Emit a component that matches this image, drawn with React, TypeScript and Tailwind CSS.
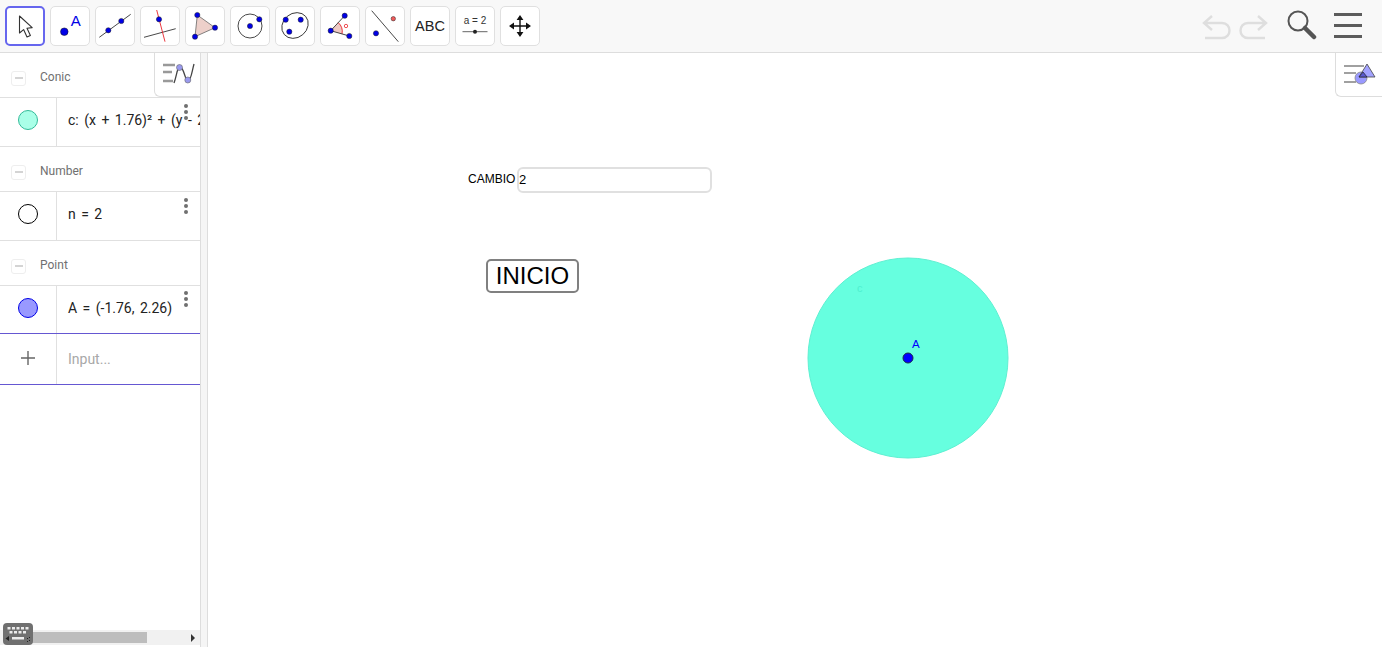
import React from 'react';

const BLUE = '#0000e6';

const Dot = ({ x, y, r = 2.6, fill = BLUE }: { x: number; y: number; r?: number; fill?: string }) => (
  <circle cx={x} cy={y} r={r} fill={fill} stroke="#222" strokeWidth={0.5} />
);

const ToolButton = ({ active = false, children }: { active?: boolean; children: React.ReactNode }) => (
  <div className={`w-10 h-10 shrink-0 bg-white rounded-[5px] ${active ? 'border-2 border-[#6666ee]' : 'border border-[#e0e0e0]'}`}>
    {children}
  </div>
);

const ToolIcon = ({ children, inset }: { children: React.ReactNode; inset: boolean }) => (
  <svg viewBox="0 0 40 40" className={`block w-10 h-10 ${inset ? '-m-[2px]' : '-m-px'}`}>
    {children}
  </svg>
);

const tools: React.ReactNode[] = [
  <path key="m" d="M14.5 10 L14.5 27 L18.6 23.6 L22 31 L25.4 29.4 L22 22.2 L27.2 21.6 Z" fill="#fff" stroke="#333" strokeWidth={1.1} strokeLinejoin="round" />,
  <g key="p">
    <circle cx={14.3} cy={25.7} r={3.8} fill={BLUE} stroke="#111" strokeWidth={0.5} />
    <text x={25.7} y={19.6} textAnchor="middle" fontSize={15} fill={BLUE} fontFamily="Liberation Sans, sans-serif">A</text>
  </g>,
  <g key="l">
    <line x1={4.3} y1={31.3} x2={35.7} y2={8.3} stroke="#333" strokeWidth={0.9} />
    <Dot x={13.3} y={24.3} />
    <Dot x={26.3} y={15} />
  </g>,
  <g key="n">
    <line x1={4} y1={31.3} x2={35.7} y2={22.7} stroke="#333" strokeWidth={0.9} />
    <line x1={16.7} y1={4} x2={25} y2={35.7} stroke="#e8232a" strokeWidth={0.9} />
    <Dot x={19} y={13.3} />
  </g>,
  <g key="t">
    <path d="M12.3 9 L30 21.7 L10 30.7 Z" fill="#edd0ca" stroke="#666" strokeWidth={0.8} />
    <Dot x={12.3} y={9} />
    <Dot x={30} y={21.7} />
    <Dot x={10} y={30.7} />
  </g>,
  <g key="c">
    <circle cx={20} cy={20} r={12} fill="none" stroke="#333" strokeWidth={0.9} />
    <Dot x={20} y={20} />
    <Dot x={29.3} y={13.3} />
  </g>,
  <g key="e">
    <ellipse cx={20} cy={19.5} rx={14} ry={12} transform="rotate(-40 20 19.5)" fill="none" stroke="#333" strokeWidth={0.9} />
    <Dot x={10.7} y={13.7} />
    <Dot x={25.7} y={13.7} />
    <Dot x={14.3} y={25.7} />
  </g>,
  <g key="a">
    <path d="M10.7 24.7 L18.2 16.6 A12 12 0 0 1 22 28 Z" fill="#efc9c3" />
    <path d="M18.2 16.6 A12 12 0 0 1 22 28" fill="none" stroke="#e8232a" strokeWidth={0.9} />
    <line x1={10.7} y1={24.7} x2={24.7} y2={9.7} stroke="#333" strokeWidth={0.9} />
    <line x1={10.7} y1={24.7} x2={29.3} y2={30} stroke="#333" strokeWidth={0.9} />
    <circle cx={26} cy={20} r={1.7} fill="none" stroke="#e8232a" strokeWidth={0.8} />
    <Dot x={10.7} y={24.7} />
    <Dot x={24.7} y={9.7} />
    <Dot x={29.3} y={30} />
  </g>,
  <g key="r">
    <line x1={6.7} y1={4.7} x2={33.3} y2={35.7} stroke="#333" strokeWidth={0.9} />
    <Dot x={28.3} y={12.7} r={2.2} fill="#f05a5a" />
    <Dot x={11} y={27.3} />
  </g>,
  <text key="abc" x={20} y={25} textAnchor="middle" fontSize={14.5} fill="#222" fontFamily="Liberation Sans, sans-serif">ABC</text>,
  <g key="s">
    <text x={20} y={18} textAnchor="middle" fontSize={10} fill="#333" fontFamily="Liberation Sans, sans-serif">a = 2</text>
    <line x1={7.5} y1={25.7} x2={32.5} y2={25.7} stroke="#555" strokeWidth={0.9} />
    <circle cx={20} cy={25.7} r={2} fill="#222" />
  </g>,
  <g key="v" fill="#111" stroke="#111">
    <path d="M20 13 V27 M13 20 H27" strokeWidth={1.4} />
    <path d="M20 9 L16.6 14 H23.4 Z M20 31 L16.6 26 H23.4 Z M9 20 L14 16.6 V23.4 Z M31 20 L26 16.6 V23.4 Z" stroke="none" />
  </g>,
];

const Marble = ({ className }: { className: string }) => (
  <div className={`w-5 h-5 rounded-full border ${className}`} />
);

const MoreDots = ({ className }: { className: string }) => (
  <div className={`absolute left-[184px] flex flex-col gap-[2px] ${className}`}>
    <div className="w-1 h-1 rounded-full bg-[#707070]" />
    <div className="w-1 h-1 rounded-full bg-[#707070]" />
    <div className="w-1 h-1 rounded-full bg-[#707070]" />
  </div>
);

const GroupHeader = ({ label }: { label: string }) => (
  <div className="h-[45px] flex items-center border-b border-[#e0e0e0] pl-[11px] pt-[4px]">
    <div className="w-[15px] h-[15px] rounded-[3px] border border-[#eeeeee] flex items-center justify-center mt-[2px]">
      <div className="w-[8px] h-[2px] bg-[#d4d4d4]" />
    </div>
    <span className="ml-[14px] text-[12px] text-[#707070]">{label}</span>
  </div>
);

const AlgebraRow = ({ marble, dots, heightClass, borderClass, children }: { marble: string; dots: string; heightClass: string; borderClass: string; children: React.ReactNode }) => (
  <div className={`relative flex border-b ${heightClass} ${borderClass}`}>
    <div className="w-[57px] shrink-0 flex items-center justify-center border-r border-[#e0e0e0] pb-[4px]">
      <Marble className={marble} />
    </div>
    <div className="pl-[11px] pb-[4px] flex items-center text-[14px] text-[#222] whitespace-nowrap overflow-hidden [word-spacing:2px]">{children}</div>
    <MoreDots className={dots} />
  </div>
);

const AlgebraToggle = () => (
  <div className="absolute top-0 right-0 w-[46px] h-[44px] bg-white border-l border-b border-[#dddddd] rounded-bl-[6px]">
    <svg viewBox="0 0 46 44" className="block w-[46px] h-[44px]">
      <path d="M8 12 H20 M8 19 H17 M8 28 H18" stroke="#999999" strokeWidth={2.4} />
      <path d="M19 30 C22 22 22 14 25 14 C29 14 30 28 33 28 C36 28 37 18 39 11" fill="none" stroke="#444" strokeWidth={1.3} />
      <circle cx={24.5} cy={14.5} r={3} fill="#9999ee" stroke="#666" strokeWidth={0.6} />
      <circle cx={32.8} cy={27} r={3} fill="#9999ee" stroke="#666" strokeWidth={0.6} />
    </svg>
  </div>
);

const GraphicsToggle = () => (
  <div className="absolute top-0 right-0 w-[47px] h-[44px] bg-white border-l border-b border-[#dddddd] rounded-bl-[6px]">
    <svg viewBox="0 0 47 44" className="block w-[47px] h-[44px]">
      <path d="M8 13 H28 M8 20 H20 M8 29 H20" stroke="#a0a0a0" strokeWidth={2.2} />
      <circle cx={25} cy={25} r={6} fill="#9999ff" stroke="#888" strokeWidth={0.8} />
      <path d="M31 11 L39 24 H23 Z" fill="#9999ff" fillOpacity={0.9} stroke="#444" strokeWidth={0.8} />
      <path d="M27 19 L31 24 H23 Z" fill="#5a5ad0" stroke="#222" strokeWidth={0.7} />
    </svg>
  </div>
);

const KeyboardIcon = () => (
  <div className="absolute left-[3px] bottom-[2px] w-[30px] h-[22px] rounded-[4px] bg-[#707070]">
    <svg viewBox="0 0 30 22" className="block w-[30px] h-[22px]">
      <path d="M4.5 4 h3 v2.5 h-3z M9 4 h3 v2.5 h-3z M13.5 4 h3 v2.5 h-3z M18 4 h3 v2.5 h-3z M22.5 4 h3 v2.5 h-3z M6.5 8 h3 v2.5 h-3z M11 8 h3 v2.5 h-3z M15.5 8 h3 v2.5 h-3z M20 8 h3 v2.5 h-3z M9 14 h12 v2.5 h-12z" fill="#ececec" />
      <path d="M2.5 15.5 L6 13 V18 Z" fill="#222" />
      <path d="M24 15 h1 v1 h-1z M26 14 h1 v1 h-1z M26 17 h1 v1 h-1z M24 18 h1 v1 h-1z" fill="#222" />
    </svg>
  </div>
);

const App = () => {
  return (
    <div className="w-[1382px] h-[647px] overflow-hidden bg-white flex flex-col font-['Roboto',sans-serif]">
      {/* toolbar */}
      <div className="h-[53px] shrink-0 bg-[#f8f8f8] border-b border-[#dddddd] flex items-start">
        <div className="flex gap-[5px] pl-[5px] pt-[6px]">
          {tools.map((icon, i) => (
            <ToolButton key={i} active={i === 0}>
              <ToolIcon inset={i === 0}>{icon}</ToolIcon>
            </ToolButton>
          ))}
        </div>
        <div className="ml-auto flex items-center pr-[20px] pt-[13px]">
          <svg viewBox="0 0 30 26" className="w-[30px] h-[26px]">
            <path d="M3 9 H20 C30 9 30 24 20 24 H3 M10 2 L2 9 L10 16" fill="none" stroke="#dedede" strokeWidth={2.4} />
          </svg>
          <svg viewBox="0 0 30 26" className="ml-[6px] w-[30px] h-[26px]">
            <path d="M27 9 H10 C0 9 0 24 10 24 H27 M20 2 L28 9 L20 16" fill="none" stroke="#dedede" strokeWidth={2.4} />
          </svg>
          <svg viewBox="0 0 32 30" className="ml-[18px] w-8 h-[30px] -mt-[3px]">
            <circle cx={12} cy={11} r={9.5} fill="none" stroke="#555" strokeWidth={2} />
            <path d="M19 18 L28 27" stroke="#555" strokeWidth={4.5} strokeLinecap="round" />
          </svg>
          <div className="ml-[16px] w-7 flex flex-col gap-[8px] -mt-[3px]">
            <div className="h-[3px] bg-[#5c5c5c]" />
            <div className="h-[3px] bg-[#5c5c5c]" />
            <div className="h-[3px] bg-[#5c5c5c]" />
          </div>
        </div>
      </div>

      <div className="flex-1 flex min-h-0">
        {/* algebra view */}
        <div className="relative w-[200px] shrink-0 overflow-hidden">
          <GroupHeader label="Conic" />
          <AlgebraRow marble="bg-[#aaffe8] border-[#33bb99]" dots="top-[6px]" heightClass="h-[49px]" borderClass="border-[#e0e0e0]">
            <span>c: (x + 1.76)² + (y - 2.26)² = 4</span>
          </AlgebraRow>
          <GroupHeader label="Number" />
          <AlgebraRow marble="bg-white border-black" dots="top-[6px]" heightClass="h-[49px]" borderClass="border-[#e0e0e0]">
            <span>n = 2</span>
          </AlgebraRow>
          <GroupHeader label="Point" />
          <AlgebraRow marble="bg-[#9999ff] border-[#0000e6]" dots="top-[5px]" heightClass="h-[48px]" borderClass="border-[#6557d2]">
            <span className="mt-[2px]">A = (-1.76, 2.26)</span>
          </AlgebraRow>
          <div className="h-[51px] flex border-b border-[#6557d2]">
            <div className="w-[57px] shrink-0 flex items-center justify-center border-r border-[#e0e0e0] pb-[2px]">
              <svg viewBox="0 0 16 16" className="w-4 h-4">
                <path d="M8 1 V15 M1 8 H15" stroke="#666" strokeWidth={1.4} />
              </svg>
            </div>
            <div className="pl-[11px] pt-[1px] flex items-center text-[14px] text-[#a8a8a8]">Input...</div>
          </div>
          <AlgebraToggle />
          {/* horizontal scroll bar */}
          <div className="absolute left-0 right-0 bottom-[2px] h-[15px] bg-[#f1f1f1] flex items-center">
            <div className="ml-[12px] w-[135px] h-[11px] bg-[#bdbdbd]" />
            <div className="ml-auto mr-[5px] w-0 h-0 border-y-[4px] border-y-transparent border-l-[4px] border-l-[#333333]" />
          </div>
          <KeyboardIcon />
        </div>

        {/* splitter */}
        <div className="w-[8px] shrink-0 bg-[#f5f5f5] border-x border-[#dddddd]" />

        {/* graphics view, a free canvas */}
        <div className="relative flex-1 bg-white">
          <span className="absolute left-[260px] top-[119px] text-[12px] leading-[14px] text-black font-['Liberation_Sans',sans-serif]">CAMBIO</span>
          <div className="absolute left-[309px] top-[114px] w-[195px] h-[26px] rounded-[6px] border-2 border-[#e0e0e0] bg-white flex items-center text-[13px] text-black font-['Liberation_Sans',sans-serif]">2</div>
          <div className="absolute left-[278px] top-[206px] w-[93px] h-[34px] rounded-[5px] border-2 border-[#808080] bg-white flex items-center justify-center text-[24px] text-black font-['Liberation_Sans',sans-serif]">INICIO</div>
          <svg className="absolute left-[590px] top-[195px] w-[220px] h-[220px]" viewBox="0 0 220 220">
            <circle cx={110} cy={110} r={100} fill="#66ffdf" stroke="#5ff0d2" strokeWidth={1} />
            <text x={59} y={44} fontSize={11} fill="#4ff0d0" fontFamily="Liberation Sans, sans-serif">c</text>
            <circle cx={110} cy={110} r={5} fill="#0000ff" stroke="#1a2a4a" strokeWidth={1} />
            <text x={114} y={100} fontSize={11.5} fill="#0000ff" fontFamily="Liberation Sans, sans-serif">A</text>
          </svg>
          <GraphicsToggle />
        </div>
      </div>
    </div>
  );
};

export default App;
